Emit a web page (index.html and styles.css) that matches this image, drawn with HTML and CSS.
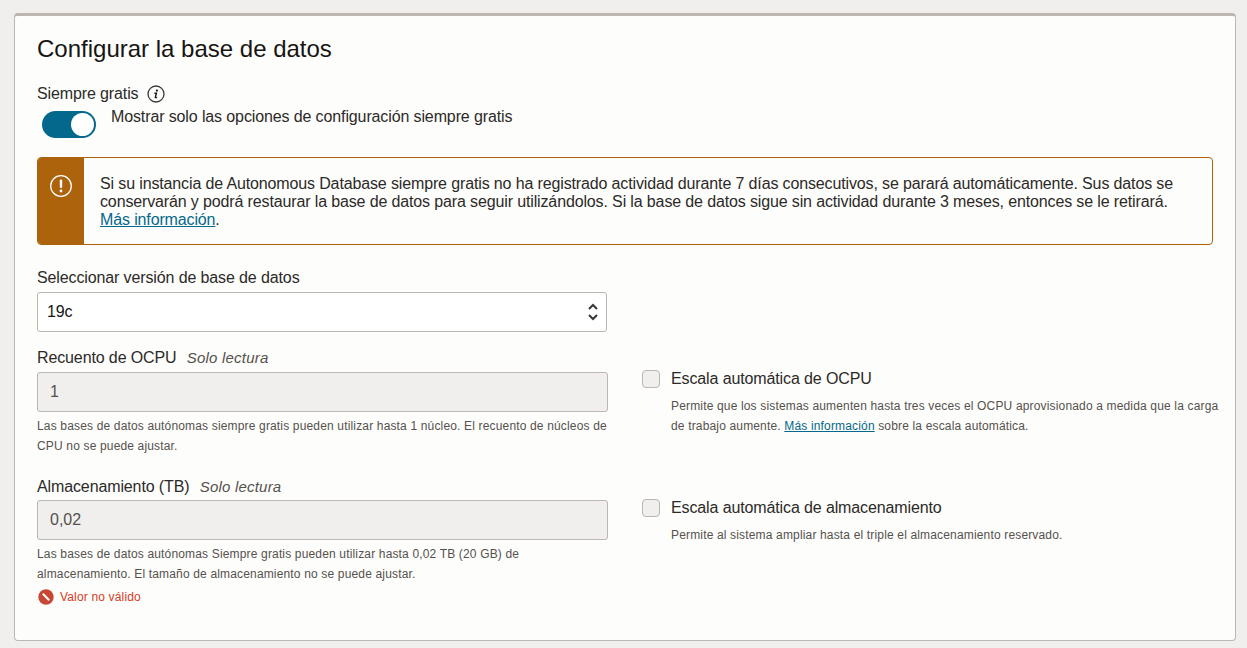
FILE: index.html
```html
<!DOCTYPE html>
<html lang="es">
<head>
<meta charset="utf-8">
<title>Configurar la base de datos</title>
<link rel="stylesheet" href="styles.css">
</head>
<body>
<section class="card">
  <h2 class="title">Configurar la base de datos</h2>
  <div class="free-label">
    <span>Siempre gratis</span>
    <svg class="info" width="18" height="18" viewBox="0 0 18 18" aria-hidden="true">
      <circle cx="9" cy="9" r="8" fill="none" stroke="#3a3836" stroke-width="1.3"/>
      <circle cx="9.9" cy="5.6" r="1.1" fill="#161513"/>
      <path d="M7.4 8.2h2l-1 3.8c-.2.8.5.9 1.5.2" fill="none" stroke="#161513" stroke-width="1.4"/>
    </svg>
  </div>
  <div class="toggle-row">
    <span class="toggle"><span class="knob"></span></span>
    <span class="toggle-text">Mostrar solo las opciones de configuración siempre gratis</span>
  </div>
  <div class="alert">
    <div class="alert-side">
      <svg width="24" height="24" viewBox="0 0 24 24" aria-hidden="true">
        <circle cx="12" cy="12" r="10.3" fill="none" stroke="#fff" stroke-width="1.3"/>
        <rect x="10.8" y="5.6" width="2.4" height="8.4" rx="1" fill="#fff"/>
        <circle cx="12" cy="17" r="1.4" fill="#fff"/>
      </svg>
    </div>
    <p class="alert-text">Si su instancia de Autonomous Database siempre gratis no ha registrado actividad durante 7 días consecutivos, se parará automáticamente. Sus datos se conservarán y podrá restaurar la base de datos para seguir utilizándolos. Si la base de datos sigue sin actividad durante 3 meses, entonces se le retirará. <a href="#">Más información</a>.</p>
  </div>
  <div class="version">
    <label class="field-label">Seleccionar versión de base de datos</label>
    <div class="select">
      <span>19c</span>
      <svg width="12" height="20" viewBox="0 0 12 20" aria-hidden="true">
        <path d="M2 7l4-4 4 4M2 13l4 4 4-4" fill="none" stroke="#3a3836" stroke-width="2"/>
      </svg>
    </div>
  </div>
  <div class="row row-ocpu">
    <div class="col-left">
      <div class="field-label">Recuento de OCPU <em>Solo lectura</em></div>
      <div class="readonly">1</div>
      <p class="help">Las bases de datos autónomas siempre gratis pueden utilizar hasta 1 núcleo. El recuento de núcleos de CPU no se puede ajustar.</p>
    </div>
    <div class="col-right">
      <div class="check-row"><span class="check"></span><span class="check-label">Escala automática de OCPU</span></div>
      <p class="help help-right">Permite que los sistemas aumenten hasta tres veces el OCPU aprovisionado a medida que la carga de trabajo aumente. <a href="#">Más información</a> sobre la escala automática.</p>
    </div>
  </div>
  <div class="row row-storage">
    <div class="col-left">
      <div class="field-label">Almacenamiento (TB) <em>Solo lectura</em></div>
      <div class="readonly readonly-tight">0,02</div>
      <p class="help">Las bases de datos autónomas Siempre gratis pueden utilizar hasta 0,02 TB (20 GB) de almacenamiento. El tamaño de almacenamiento no se puede ajustar.</p>
      <div class="error">
        <svg width="16" height="16" viewBox="0 0 16 16" aria-hidden="true">
          <circle cx="8" cy="8" r="7.7" fill="#c74634"/>
          <path d="M4.8 4.8l6.4 6.4" stroke="#fff" stroke-width="2"/>
        </svg>
        <span>Valor no válido</span>
      </div>
    </div>
    <div class="col-right">
      <div class="check-row"><span class="check"></span><span class="check-label">Escala automática de almacenamiento</span></div>
      <p class="help help-right">Permite al sistema ampliar hasta el triple el almacenamiento reservado.</p>
    </div>
  </div>
</section>
</body>
</html>
```
FILE: styles.css
```css
* { box-sizing: border-box; }
html, body { height: 100%; }
body {
  margin: 0;
  padding: 13px 11px 7px 14px;
  background: #f1efed;
  color: #161513;
  font-family: "Liberation Sans", Arial, sans-serif;
  overflow: hidden;
}
.card {
  height: 628px;
  background: #fdfdfb;
  border: 1px solid #bcb6b1;
  border-top: 3px solid #bcb6b1;
  border-radius: 4px;
  padding: 19px 14px 0 22px;
}
.title {
  margin: 0;
  font-size: 24px;
  line-height: 28px;
  font-weight: 400;
}
.free-label {
  display: flex;
  align-items: center;
  gap: 9px;
  margin-top: 20px;
  height: 22px;
  font-size: 16px;
  letter-spacing: -.12px;
  color: #2c2a28;
}
.toggle-row {
  display: flex;
  margin-top: 6px;
  padding-left: 5px;
}
.toggle {
  width: 54px;
  height: 27px;
  padding: 2px;
  border-radius: 14px;
  background: #04688c;
  display: flex;
  justify-content: flex-end;
  flex: none;
}
.knob {
  width: 23px;
  height: 23px;
  border-radius: 50%;
  background: #fff;
}
.toggle-text {
  margin-left: 15px;
  margin-top: -4px;
  font-size: 16px;
  line-height: 19px;
  letter-spacing: -.12px;
  color: #2c2a28;
}
.alert {
  display: flex;
  margin: 19px 8px 0 0;
  height: 88px;
  border: 1px solid #ac630c;
  border-radius: 4px;
  overflow: hidden;
}
.alert-side {
  width: 46px;
  flex: none;
  background: #ac630c;
  padding: 16px 0 0 11px;
}
.alert-text {
  margin: 0;
  padding: 17px 20px 0 16px;
  font-size: 16px;
  line-height: 18px;
  letter-spacing: -.135px;
  color: #2c2a28;
}
a { color: #04688c; text-decoration: underline; }
.version { margin-top: 23px; width: 570px; }
.field-label {
  font-size: 16px;
  line-height: 20px;
  letter-spacing: -.12px;
  color: #2c2a28;
}
.field-label em {
  font-size: 15px;
  letter-spacing: .2px;
  color: #55514d;
  margin-left: 6px;
}
.select {
  display: flex;
  justify-content: space-between;
  align-items: center;
  height: 40px;
  margin-top: 4px;
  padding: 0 7px 0 9px;
  background: #fff;
  border: 1px solid #bcb6b1;
  border-radius: 3px;
  font-size: 16px;
  letter-spacing: -.12px;
}
.row {
  display: grid;
  grid-template-columns: 571px 1fr;
  column-gap: 34px;
}
.row-ocpu { margin-top: 16px; }
.row-storage { margin-top: 21px; }
.readonly {
  height: 40px;
  margin-top: 4px;
  padding-left: 12px;
  background: #f0efee;
  border: 1px solid #bcb6b1;
  border-radius: 3px;
  font-size: 16px;
  line-height: 38px;
  color: #55514d;
}
.readonly-tight { margin-top: 3px; }
.help {
  margin: 4px 0 0;
  font-size: 12px;
  line-height: 20px;
  letter-spacing: .16px;
  color: #55514d;
}
.col-right { padding-top: 22px; }
.check-row { display: flex; align-items: center; }
.check {
  width: 18px;
  height: 18px;
  flex: none;
  background: #f0efee;
  border: 1px solid #bcb6b1;
  border-radius: 4px;
}
.check-label {
  margin-left: 11px;
  font-size: 16px;
  letter-spacing: -.12px;
  color: #2c2a28;
}
.help-right { margin: 8px 0 0 29px; }
.error {
  display: flex;
  align-items: center;
  gap: 6px;
  margin-top: 5px;
  margin-left: 1px;
  font-size: 12px;
  letter-spacing: .16px;
  color: #d63b25;
}
```
